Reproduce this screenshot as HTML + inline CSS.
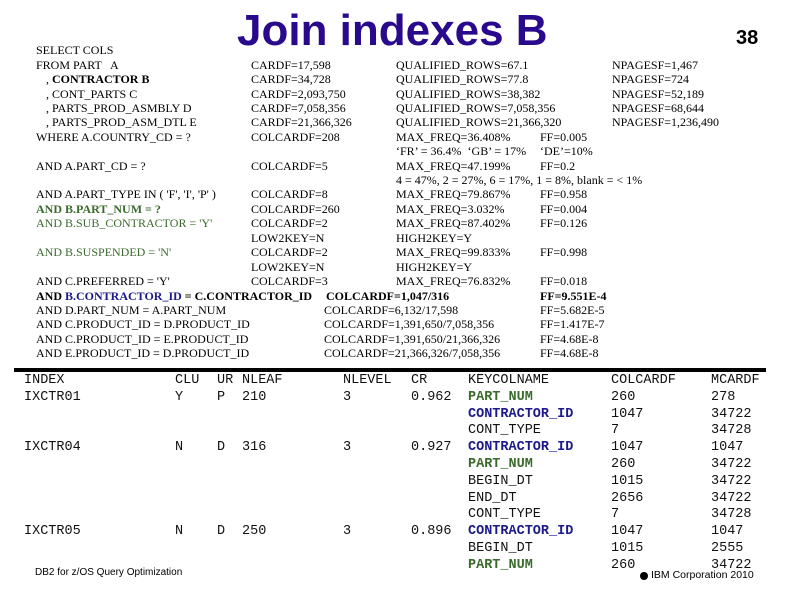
<!DOCTYPE html>
<html><head><meta charset="utf-8"><style>
body{margin:0;background:#fff;}
#p{position:relative;width:788px;height:609px;overflow:hidden;background:#fff;}
.s{position:absolute;font-family:"Liberation Serif",serif;font-size:12px;line-height:16px;white-space:pre;color:#000;}
.m{position:absolute;font-family:"Liberation Mono",monospace;font-size:13.5px;line-height:16px;white-space:pre;color:#111;}
.g{color:#3a6b2c;}
.bl{color:#1c1a8a;}
b{font-weight:bold;}
</style></head><body><div id="p">
<div style="position:absolute;left:237px;top:6px;font-family:'Liberation Sans',sans-serif;font-weight:bold;font-size:44px;line-height:50px;color:#2a0a8c;">Join indexes B</div>
<div style="position:absolute;left:736px;top:26px;font-family:'Liberation Sans',sans-serif;font-weight:bold;font-size:20px;line-height:24px;">38</div>

<div class="s" style="left:36px;top:42px">SELECT COLS</div>
<div class="s" style="left:36px;top:57px">FROM PART   A</div>
<div class="s" style="left:40px;top:71px">  , <b>CONTRACTOR B</b></div>
<div class="s" style="left:40px;top:86px">  , CONT_PARTS C</div>
<div class="s" style="left:40px;top:100px">  , PARTS_PROD_ASMBLY D</div>
<div class="s" style="left:40px;top:114px">  , PARTS_PROD_ASM_DTL E</div>
<div class="s" style="left:36px;top:129px">WHERE A.COUNTRY_CD = ?</div>
<div class="s" style="left:36px;top:158px">AND A.PART_CD = ?</div>
<div class="s" style="left:36px;top:186px">AND A.PART_TYPE IN ( 'F', 'I', 'P' )</div>
<div class="s g" style="left:36px;top:201px"><b>AND B.PART_NUM = ?</b></div>
<div class="s g" style="left:36px;top:215px">AND B.SUB_CONTRACTOR = 'Y'</div>
<div class="s g" style="left:36px;top:244px">AND B.SUSPENDED = 'N'</div>
<div class="s" style="left:36px;top:273px">AND C.PREFERRED = 'Y'</div>
<div class="s" style="left:36px;top:288px"><b>AND <span class="bl">B.CONTRACTOR_ID</span> = C.CONTRACTOR_ID</b></div>
<div class="s" style="left:36px;top:302px">AND D.PART_NUM = A.PART_NUM</div>
<div class="s" style="left:36px;top:316px">AND C.PRODUCT_ID = D.PRODUCT_ID</div>
<div class="s" style="left:36px;top:331px">AND C.PRODUCT_ID = E.PRODUCT_ID</div>
<div class="s" style="left:36px;top:345px">AND E.PRODUCT_ID = D.PRODUCT_ID</div>

<div class="s" style="left:251px;top:57px">CARDF=17,598</div>
<div class="s" style="left:251px;top:71px">CARDF=34,728</div>
<div class="s" style="left:251px;top:86px">CARDF=2,093,750</div>
<div class="s" style="left:251px;top:100px">CARDF=7,058,356</div>
<div class="s" style="left:251px;top:114px">CARDF=21,366,326</div>
<div class="s" style="left:251px;top:129px">COLCARDF=208</div>
<div class="s" style="left:251px;top:158px">COLCARDF=5</div>
<div class="s" style="left:251px;top:186px">COLCARDF=8</div>
<div class="s" style="left:251px;top:201px">COLCARDF=260</div>
<div class="s" style="left:251px;top:215px">COLCARDF=2</div>
<div class="s" style="left:251px;top:230px">LOW2KEY=N</div>
<div class="s" style="left:251px;top:244px">COLCARDF=2</div>
<div class="s" style="left:251px;top:259px">LOW2KEY=N</div>
<div class="s" style="left:251px;top:273px">COLCARDF=3</div>
<div class="s" style="left:326px;top:288px"><b>COLCARDF=1,047/316</b></div>
<div class="s" style="left:324px;top:302px">COLCARDF=6,132/17,598</div>
<div class="s" style="left:324px;top:316px">COLCARDF=1,391,650/7,058,356</div>
<div class="s" style="left:324px;top:331px">COLCARDF=1,391,650/21,366,326</div>
<div class="s" style="left:324px;top:345px">COLCARDF=21,366,326/7,058,356</div>

<div class="s" style="left:396px;top:57px">QUALIFIED_ROWS=67.1</div>
<div class="s" style="left:396px;top:71px">QUALIFIED_ROWS=77.8</div>
<div class="s" style="left:396px;top:86px">QUALIFIED_ROWS=38,382</div>
<div class="s" style="left:396px;top:100px">QUALIFIED_ROWS=7,058,356</div>
<div class="s" style="left:396px;top:114px">QUALIFIED_ROWS=21,366,320</div>
<div class="s" style="left:396px;top:129px">MAX_FREQ=36.408%</div>
<div class="s" style="left:396px;top:143px">‘FR’ = 36.4%  ‘GB’ = 17%</div>
<div class="s" style="left:396px;top:158px">MAX_FREQ=47.199%</div>
<div class="s" style="left:396px;top:172px">4 = 47%, 2 = 27%, 6 = 17%, 1 = 8%, blank = &lt; 1%</div>
<div class="s" style="left:396px;top:186px">MAX_FREQ=79.867%</div>
<div class="s" style="left:396px;top:201px">MAX_FREQ=3.032%</div>
<div class="s" style="left:396px;top:215px">MAX_FREQ=87.402%</div>
<div class="s" style="left:396px;top:230px">HIGH2KEY=Y</div>
<div class="s" style="left:396px;top:244px">MAX_FREQ=99.833%</div>
<div class="s" style="left:396px;top:259px">HIGH2KEY=Y</div>
<div class="s" style="left:396px;top:273px">MAX_FREQ=76.832%</div>

<div class="s" style="left:540px;top:129px">FF=0.005</div>
<div class="s" style="left:540px;top:143px">‘DE’=10%</div>
<div class="s" style="left:540px;top:158px">FF=0.2</div>
<div class="s" style="left:540px;top:186px">FF=0.958</div>
<div class="s" style="left:540px;top:201px">FF=0.004</div>
<div class="s" style="left:540px;top:215px">FF=0.126</div>
<div class="s" style="left:540px;top:244px">FF=0.998</div>
<div class="s" style="left:540px;top:273px">FF=0.018</div>
<div class="s" style="left:540px;top:288px"><b>FF=9.551E-4</b></div>
<div class="s" style="left:540px;top:302px">FF=5.682E-5</div>
<div class="s" style="left:540px;top:316px">FF=1.417E-7</div>
<div class="s" style="left:540px;top:331px">FF=4.68E-8</div>
<div class="s" style="left:540px;top:345px">FF=4.68E-8</div>

<div class="s" style="left:612px;top:57px">NPAGESF=1,467</div>
<div class="s" style="left:612px;top:71px">NPAGESF=724</div>
<div class="s" style="left:612px;top:86px">NPAGESF=52,189</div>
<div class="s" style="left:612px;top:100px">NPAGESF=68,644</div>
<div class="s" style="left:612px;top:114px">NPAGESF=1,236,490</div>

<div style="position:absolute;left:14px;top:368px;width:752px;height:4px;background:#000;"></div>

<div class="m" style="left:24px;top:373px">INDEX</div>
<div class="m" style="left:175px;top:373px">CLU</div>
<div class="m" style="left:217px;top:373px">UR</div>
<div class="m" style="left:242px;top:373px">NLEAF</div>
<div class="m" style="left:343px;top:373px">NLEVEL</div>
<div class="m" style="left:411px;top:373px">CR</div>
<div class="m" style="left:468px;top:373px">KEYCOLNAME</div>
<div class="m" style="left:611px;top:373px">COLCARDF</div>
<div class="m" style="left:711px;top:373px">MCARDF</div>

<div class="m" style="left:24px;top:390px">IXCTR01</div>
<div class="m" style="left:175px;top:390px">Y</div>
<div class="m" style="left:217px;top:390px">P</div>
<div class="m" style="left:242px;top:390px">210</div>
<div class="m" style="left:343px;top:390px">3</div>
<div class="m" style="left:411px;top:390px">0.962</div>
<div class="m" style="left:24px;top:440px">IXCTR04</div>
<div class="m" style="left:175px;top:440px">N</div>
<div class="m" style="left:217px;top:440px">D</div>
<div class="m" style="left:242px;top:440px">316</div>
<div class="m" style="left:343px;top:440px">3</div>
<div class="m" style="left:411px;top:440px">0.927</div>
<div class="m" style="left:24px;top:524px">IXCTR05</div>
<div class="m" style="left:175px;top:524px">N</div>
<div class="m" style="left:217px;top:524px">D</div>
<div class="m" style="left:242px;top:524px">250</div>
<div class="m" style="left:343px;top:524px">3</div>
<div class="m" style="left:411px;top:524px">0.896</div>

<div class="m" style="left:468px;top:390px"><b class="g">PART_NUM</b></div>
<div class="m" style="left:468px;top:407px"><b class="bl">CONTRACTOR_ID</b></div>
<div class="m" style="left:468px;top:423px">CONT_TYPE</div>
<div class="m" style="left:468px;top:440px"><b class="bl">CONTRACTOR_ID</b></div>
<div class="m" style="left:468px;top:457px"><b class="g">PART_NUM</b></div>
<div class="m" style="left:468px;top:474px">BEGIN_DT</div>
<div class="m" style="left:468px;top:491px">END_DT</div>
<div class="m" style="left:468px;top:507px">CONT_TYPE</div>
<div class="m" style="left:468px;top:524px"><b class="bl">CONTRACTOR_ID</b></div>
<div class="m" style="left:468px;top:541px">BEGIN_DT</div>
<div class="m" style="left:468px;top:558px"><b class="g">PART_NUM</b></div>

<div class="m" style="left:611px;top:390px">260</div>
<div class="m" style="left:611px;top:407px">1047</div>
<div class="m" style="left:611px;top:423px">7</div>
<div class="m" style="left:611px;top:440px">1047</div>
<div class="m" style="left:611px;top:457px">260</div>
<div class="m" style="left:611px;top:474px">1015</div>
<div class="m" style="left:611px;top:491px">2656</div>
<div class="m" style="left:611px;top:507px">7</div>
<div class="m" style="left:611px;top:524px">1047</div>
<div class="m" style="left:611px;top:541px">1015</div>
<div class="m" style="left:611px;top:558px">260</div>

<div class="m" style="left:711px;top:390px">278</div>
<div class="m" style="left:711px;top:407px">34722</div>
<div class="m" style="left:711px;top:423px">34728</div>
<div class="m" style="left:711px;top:440px">1047</div>
<div class="m" style="left:711px;top:457px">34722</div>
<div class="m" style="left:711px;top:474px">34722</div>
<div class="m" style="left:711px;top:491px">34722</div>
<div class="m" style="left:711px;top:507px">34728</div>
<div class="m" style="left:711px;top:524px">1047</div>
<div class="m" style="left:711px;top:541px">2555</div>
<div class="m" style="left:711px;top:558px">34722</div>

<div style="position:absolute;left:35px;top:567px;font-family:'Liberation Sans',sans-serif;font-size:10px;line-height:12px;">DB2 for z/OS Query Optimization</div>
<div style="position:absolute;left:640px;top:572px;width:8px;height:8px;border-radius:50%;background:#000;"></div>
<div style="position:absolute;left:651px;top:569px;font-family:'Liberation Sans',sans-serif;font-size:10.5px;line-height:13px;">IBM Corporation 2010</div>
</div></body></html>
